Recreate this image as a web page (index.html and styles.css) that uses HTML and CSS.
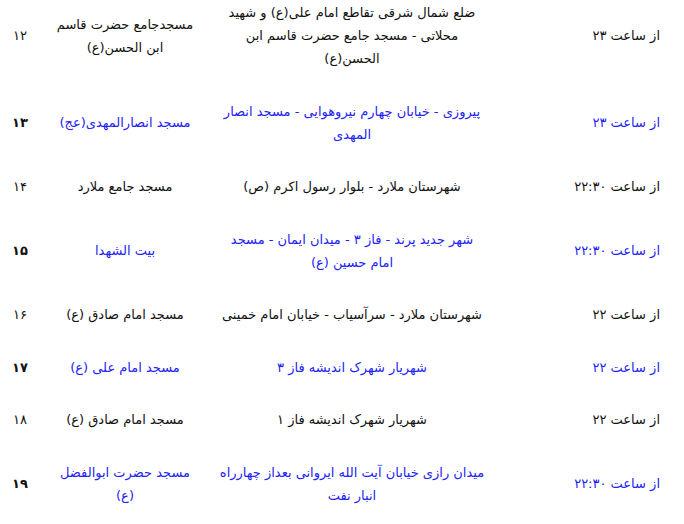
FILE: index.html
```html
<!DOCTYPE html>
<html lang="fa" dir="rtl">
<head>
<meta charset="utf-8">
<link rel="stylesheet" href="styles.css">
</head>
<body>
<table class="list">
  <colgroup>
    <col class="c-time"><col class="c-addr"><col class="c-name"><col class="c-num">
  </colgroup>
  <tbody>
    <tr class="row">
      <td class="time">از ساعت ۲۳</td>
      <td class="addr">ضلع شمال شرقی تقاطع امام علی(ع) و شهید<br>محلاتی - مسجد جامع حضرت قاسم ابن<br>الحسن(ع)</td>
      <td class="name">مسجدجامع حضرت قاسم<br>ابن الحسن(ع)</td>
      <td class="num">۱۲</td>
    </tr>
    <tr class="row alt">
      <td class="time">از ساعت ۲۳</td>
      <td class="addr">پیروزی - خیابان چهارم نیروهوایی - مسجد انصار<br>المهدی</td>
      <td class="name">مسجد انصارالمهدی(عج)</td>
      <td class="num">۱۳</td>
    </tr>
    <tr class="row">
      <td class="time">از ساعت ۲۲:۳۰</td>
      <td class="addr">شهرستان ملارد - بلوار رسول اکرم (ص)</td>
      <td class="name">مسجد جامع ملارد</td>
      <td class="num">۱۴</td>
    </tr>
    <tr class="row alt">
      <td class="time">از ساعت ۲۲:۳۰</td>
      <td class="addr">شهر جدید پرند - فاز ۳ - میدان ایمان - مسجد<br>امام حسین (ع)</td>
      <td class="name">بیت الشهدا</td>
      <td class="num">۱۵</td>
    </tr>
    <tr class="row">
      <td class="time">از ساعت ۲۲</td>
      <td class="addr">شهرستان ملارد - سرآسیاب - خیابان امام خمینی</td>
      <td class="name">مسجد امام صادق (ع)</td>
      <td class="num">۱۶</td>
    </tr>
    <tr class="row alt">
      <td class="time">از ساعت ۲۲</td>
      <td class="addr">شهریار شهرک اندیشه فاز ۳</td>
      <td class="name">مسجد امام علی (ع)</td>
      <td class="num">۱۷</td>
    </tr>
    <tr class="row">
      <td class="time">از ساعت ۲۲</td>
      <td class="addr">شهریار شهرک اندیشه فاز ۱</td>
      <td class="name">مسجد امام صادق (ع)</td>
      <td class="num">۱۸</td>
    </tr>
    <tr class="row alt">
      <td class="time">از ساعت ۲۲:۳۰</td>
      <td class="addr">میدان رازی خیابان آیت الله ایروانی بعداز چهارراه<br>انبار نفت</td>
      <td class="name">مسجد حضرت ابوالفضل<br>(ع)</td>
      <td class="num">۱۹</td>
    </tr>
  </tbody>
</table>
</body>
</html>
```
FILE: styles.css
```css
html, body {
  margin: 0;
  padding: 0;
  background: #ffffff;
}
body {
  font-family: "DejaVu Sans", "Noto Sans", sans-serif;
  font-size: 13px;
  color: #111111;
  overflow: hidden;
}
.list {
  border-collapse: collapse;
  table-layout: fixed;
  width: 684px;
  margin-top: -13px;
}
.c-time { width: 190px; }
.c-addr { width: 284px; }
.c-name { width: 170px; }
.c-num { width: 40px; }
.list td {
  padding: 14px 0 15.5px;
  height: 23px;
  line-height: 23px;
  vertical-align: middle;
  white-space: nowrap;
}
.time {
  text-align: right;
  padding-right: 24px !important;
}
.addr, .name, .num {
  text-align: center;
}
.alt td {
  color: #2323f5;
}
.alt .num {
  color: #111111;
  font-weight: bold;
}
```
